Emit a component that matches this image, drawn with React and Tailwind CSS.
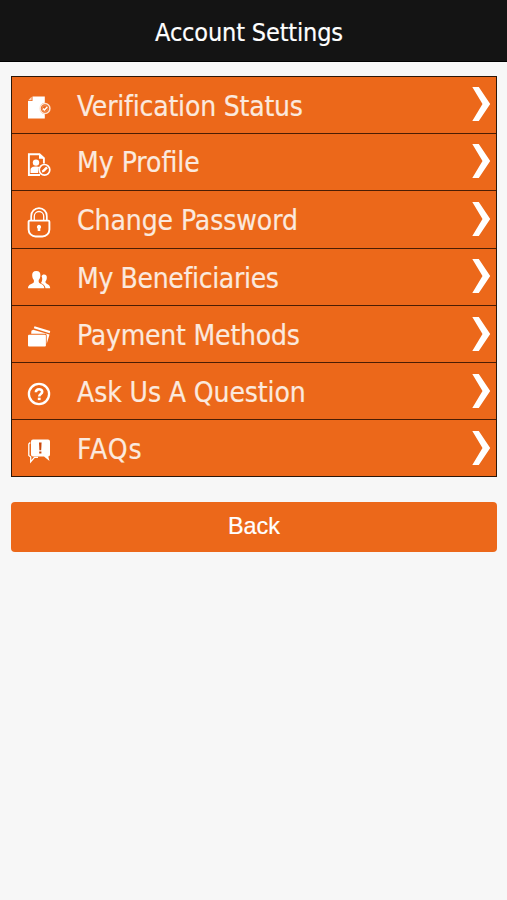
import React from "react";

const VerificationIcon = () => (
    <svg width="24" height="32" viewBox="0 0 24 32" fill="none">
        <path d="M5.500 4.500H17.800V10.800A5.800 5.800 0 0 0 17.800 22.200V26.500H1V9H5.500Z" fill="#fff" />
        <path d="M1.200 8.200L4.600 4.700V8.200Z" fill="#fbd3b8" />
        <circle cx="18" cy="16.500" r="4.900" stroke="#fde3d2" strokeWidth="1.500" />
        <circle cx="18" cy="16.500" r="3" stroke="#f7b78c" strokeWidth="0.600" />
        <path d="M16 16.600L17.500 18L20.200 15" stroke="#fff" strokeWidth="1.500" />
    </svg>
);

const ProfileIcon = () => (
    <svg width="24" height="32" viewBox="0 0 24 32" fill="none">
        <path d="M13 26H1.900V5.200H12.500L16.900 9.200V14.500" stroke="#fff" strokeWidth="1.900" />
        <path d="M12 5V9.800H17Z" fill="#fff" />
        <circle cx="9" cy="13.600" r="3.200" fill="#fff" />
        <path d="M3.500 24V21C3.500 18.300 6 17.600 9 17.600C10.500 17.600 11.500 17.800 12.200 18.200C11 20 10.800 22 11.200 24Z" fill="#fff" />
        <circle cx="17.500" cy="20.800" r="5.300" stroke="#fff" strokeWidth="1.700" />
        <path d="M14.800 23.600L15.300 21.300L19.200 17.500L20.900 19.200L17.100 23Z" fill="#fff" />
    </svg>
);

const LockIcon = () => (
    <svg width="24" height="32" viewBox="0 0 24 32" fill="none" stroke="#fff">
        <path d="M4.200 13.500V8.900A7.800 7.800 0 0 1 19.800 8.900V13.500" strokeWidth="1.700" />
        <path d="M7.300 13.500V9.200A4.700 4.700 0 0 1 16.700 9.200V13.500" strokeWidth="1.300" />
        <path d="M2.800 13.600H21.200A1.200 1.200 0 0 1 22.400 14.800V22.500A7 7 0 0 1 15.400 29.500H8.600A7 7 0 0 1 1.600 22.500V14.800A1.200 1.200 0 0 1 2.800 13.600Z" strokeWidth="1.900" />
        <path d="M12 17.800A2.200 2.200 0 0 0 10.700 21.700V24H13.300V21.700A2.200 2.200 0 0 0 12 17.800Z" fill="#fff" stroke="none" />
    </svg>
);

const PeopleIcon = () => (
    <svg width="24" height="32" viewBox="0 0 24 32" fill="#fff">
        <path d="M14.600 12.300C15 11 15.800 10.500 17 10.500C19.200 10.500 20 12 19.800 14C19.700 15.700 19.200 16.500 18.500 17.200V18.500C19 20.300 23.200 20.100 23.200 24.300H18.500C18.200 20.900 15.400 20.200 14 19C15.200 17.200 15.800 14.500 14.600 12.300Z" />
        <path d="M9.300 7C12.400 7 13.600 9 13.400 11.500C13.300 13.700 12.600 15 11.700 15.900V18C12.300 20.500 17.300 19.500 17.300 24.300H1C1 19.500 6.300 20.500 6.900 18V15.900C6 15 5.300 13.700 5.200 11.500C5 9 6.200 7 9.300 7Z" />
    </svg>
);

const CardsIcon = () => (
    <svg width="24" height="32" viewBox="0 0 24 32" fill="#fff">
        <path d="M7.500 5.200L23.200 10L22.700 12.200L6.800 7.300Z" />
        <path d="M4.400 9.800L6.200 8.700L22.500 13.600L19.700 23V14.400C19.700 13.400 19 12.800 18 12.800H4.200Z" />
        <rect x="1" y="13.800" width="17.900" height="11.800" rx="1" />
    </svg>
);

const QuestionIcon = () => (
    <svg width="24" height="32" viewBox="0 0 24 32" fill="none" stroke="#fff">
        <circle cx="12" cy="16" r="10.100" strokeWidth="2.300" />
        <path d="M8.900 14.300C8.900 10.300 15.200 10.400 15.200 13.800C15.200 16.100 12.200 15.900 12.200 18.600" strokeWidth="2.600" />
        <rect x="10.800" y="19.700" width="2.800" height="2.400" fill="#fff" stroke="none" />
    </svg>
);

const FaqIcon = () => (
    <svg width="24" height="32" viewBox="0 0 24 32" fill="none">
        <path d="M3.300 7.500L1.800 9V20.500L3.700 22V26.800L7.500 22.400H11" stroke="#fff" strokeWidth="1.300" />
        <path d="M6 4.500H21Q23 4.500 23 6.500V19.500Q23 21.300 21.300 21.500L22.500 26L17 21.500H6Q4 21.500 4 19.500V6.500Q4 4.500 6 4.500Z" fill="#fff" />
        <path d="M12 7.500H14.600L14.200 15.300H12.400Z" fill="#c9480b" />
        <rect x="12.200" y="16.500" width="2.200" height="2" fill="#c9480b" />
    </svg>
);

const menuItems = [
    { label: "Verification Status", icon: VerificationIcon, height: "h-[57px]", text: "pt-[3px] tracking-[-0.2px]", arrow: "mb-[2px]" },
    { label: "My Profile", icon: ProfileIcon, height: "h-[57px]", text: "pt-[1px]", arrow: "mb-[2px]" },
    { label: "Change Password", icon: LockIcon, height: "h-[58px]", text: "pt-[2px] tracking-[-0.07px]", arrow: "mb-[2px]" },
    { label: "My Beneficiaries", icon: PeopleIcon, height: "h-[57px]", text: "pt-[4px] tracking-[-0.34px]", arrow: "mb-[2px]" },
    { label: "Payment Methods", icon: CardsIcon, height: "h-[57px]", text: "pt-[3px] tracking-[-0.2px]", arrow: "mb-px" },
    { label: "Ask Us A Question", icon: QuestionIcon, height: "h-[57px]", text: "pt-[3px] tracking-[-0.1px]", arrow: "mb-0" },
    { label: "FAQs", icon: FaqIcon, height: "h-[57px]", text: "pt-[4px] tracking-[1px]", arrow: "mb-0" },
];

const MenuRow = ({ label, icon: Icon, height, text, arrow }) => (
    <button className={`flex w-full items-center border-b border-[#4b1d03] pl-[15px] pr-[5px] text-left last:border-[#2b1608] ${height}`}>
        <span className="mt-[6px] w-[50px] shrink-0">
            <Icon />
        </span>
        <span className={`grow whitespace-nowrap text-[28px] leading-8 text-[#fbe9de] [-webkit-text-stroke:0.2px_#fbe9de] ${text}`}>
            {label}
        </span>
        <svg className={`shrink-0 ${arrow}`} width="19" height="36" viewBox="0 0 19 36" fill="#fff">
            <path d="M0.300 1H6.800L18.200 18L6.800 35H0.300L10.500 18Z" />
        </svg>
    </button>
);

export default function App() {
    return (
        <div className="min-h-screen bg-[#f7f7f7] font-['DejaVu_Sans_Condensed','DejaVu_Sans',sans-serif] [font-stretch:condensed]">
            <header className="flex h-[62px] items-center justify-center border-b border-black bg-[#141414] pr-[9px] pt-1">
                <h1 className="whitespace-nowrap text-[25px] leading-8 tracking-[-0.15px] text-white [-webkit-text-stroke:0.2px_white]">
                    Account Settings
                </h1>
            </header>

            <main className="pl-[11px] pr-[10px] pt-[14px]">
                <nav className="border border-b-0 border-[#2b1608] bg-[#ec681a]">
                    {menuItems.map((item) => (
                        <MenuRow key={item.label} {...item} />
                    ))}
                </nav>

                <button className="mt-[25px] h-[50px] w-full rounded-[4px] bg-[#ec681a] font-['Liberation_Sans',sans-serif] text-[23.4px] text-white [-webkit-text-stroke:0.2px_white]">
                    Back
                </button>
            </main>
        </div>
    );
}
